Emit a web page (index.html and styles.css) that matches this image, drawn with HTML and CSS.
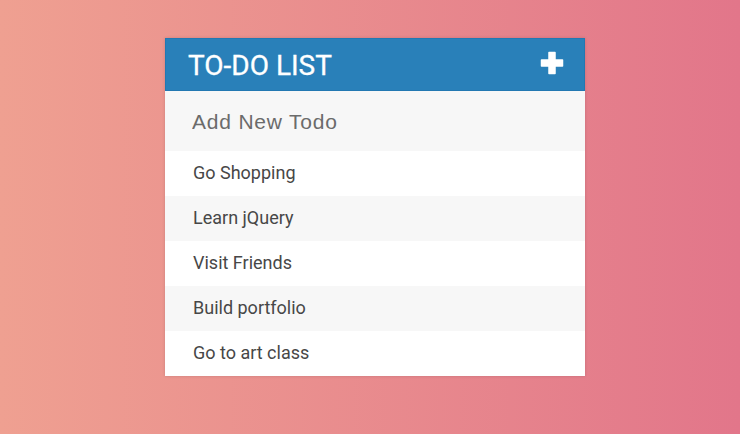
FILE: index.html
```html
<!DOCTYPE html>
<html>
<head>
<meta charset="utf-8">
<link rel="stylesheet" href="styles.css">
</head>
<body>
<div class="page">
  <div class="card">
    <div class="header">
      <h1 class="title">TO-DO LIST</h1>
      <svg class="plus" width="24" height="24" viewBox="0 0 24 24">
        <path d="M9 1.5h6v7.5h7.5v6H15v7.5H9V15H1.5V9H9z" fill="#fff" stroke="#fff" stroke-width="1.5" stroke-linejoin="round"/>
      </svg>
    </div>
    <input class="new-todo" type="text" placeholder="Add New Todo">
    <ul class="list">
      <li class="item">Go Shopping</li>
      <li class="item">Learn jQuery</li>
      <li class="item">Visit Friends</li>
      <li class="item">Build portfolio</li>
      <li class="item">Go to art class</li>
    </ul>
  </div>
</div>
</body>
</html>
```
FILE: styles.css
```css
html, body {
  margin: 0;
  padding: 0;
  height: 100%;
}
body {
  background: linear-gradient(90deg, #efa091 0%, #e2768a 100%);
  font-family: Roboto, "Liberation Sans", sans-serif;
}
.page {
  display: flex;
  justify-content: center;
  padding-top: 38px;
  padding-left: 10px;
}
.card {
  width: 420px;
  background: #fff;
  box-shadow: 0 0 3px rgba(0, 0, 0, 0.15);
}
.header {
  height: 53px;
  background: #2980b9;
  box-shadow: inset 0 0 0 1px #2278b2;
  display: flex;
  align-items: center;
  justify-content: space-between;
  padding: 0 21px 0 23px;
  box-sizing: border-box;
}
.title {
  margin: 0;
  font-weight: 400;
  font-size: 28px;
  color: #fff;
  line-height: 1;
  padding-top: 2px;
  -webkit-text-stroke: 0.3px #fff;
}
.plus {
  display: block;
  margin-top: -4px;
}
.new-todo {
  display: block;
  width: 100%;
  box-sizing: border-box;
  height: 60px;
  border: 0;
  outline: none;
  background: #f7f7f7;
  padding: 2px 0 0 27px;
  font-family: "Liberation Sans", Arial, sans-serif;
  font-size: 21px;
  letter-spacing: 0.8px;
  color: #6b6b6b;
}
.new-todo::placeholder {
  color: #6b6b6b;
  opacity: 1;
}
.list {
  list-style: none;
  margin: 0;
  padding: 0;
}
.item {
  height: 45px;
  line-height: 44px;
  padding-left: 28px;
  font-size: 18px;
  color: #474747;
  background: #fff;
}
.item:nth-child(2n) {
  background: #f7f7f7;
}
```
